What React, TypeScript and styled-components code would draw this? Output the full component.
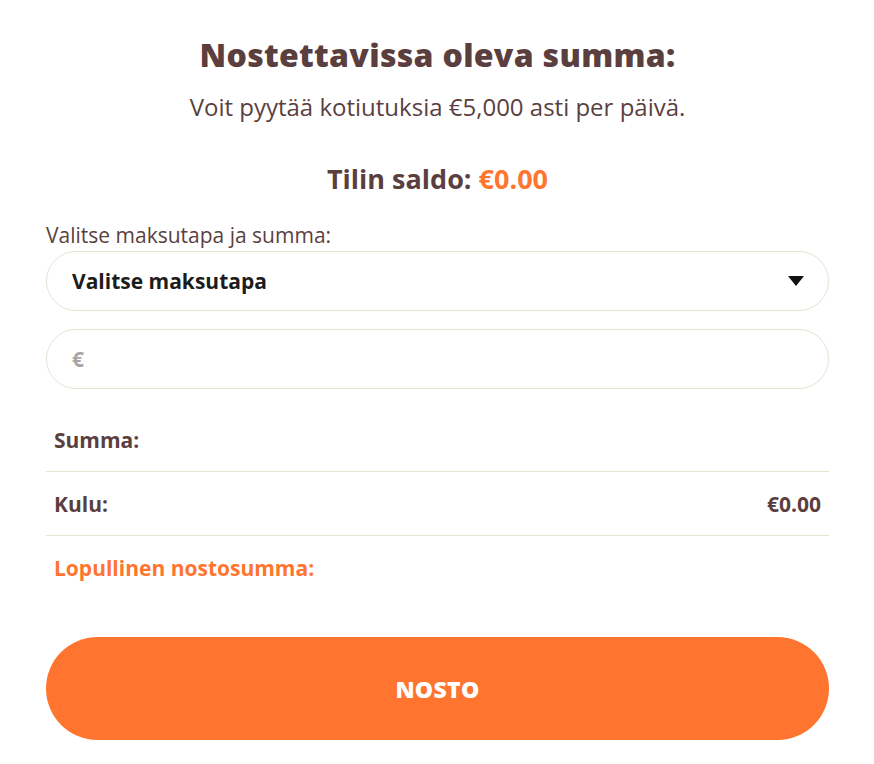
import React from 'react';
import styled, { createGlobalStyle } from 'styled-components';

const GlobalStyle = createGlobalStyle`
    body {
        margin: 0;
        background: #ffffff;
        font-family: 'Open Sans', 'Liberation Sans', sans-serif;
        color: #5b3f3f;
    }
`;

const Page = styled.div`
    display: flex;
    flex-direction: column;
    padding: 30px 45px 0 46px;
`;

const Title = styled.h1`
    margin: 0;
    text-align: center;
    font-family: 'Open Sans', sans-serif;
    font-size: 32px;
    font-weight: 800;
    line-height: 50px;
    color: #5b3f3f;
    letter-spacing: 0.3px;
`;

const SubTitle = styled.p`
    margin: 10px 0 0;
    text-align: center;
    font-size: 24px;
    line-height: 34px;
    color: #5b3f3f;
`;

const Balance = styled.div`
    margin-top: 36px;
    text-align: center;
    font-size: 27px;
    font-weight: 700;
    line-height: 38px;
    color: #5b3f3f;
`;

const Amount = styled.span<{ $accent?: boolean }>`
    color: ${(p) => (p.$accent ? '#ff7530' : 'inherit')};
`;

const Label = styled.div`
    margin-top: 23px;
    font-size: 21px;
    line-height: 28px;
    color: #5b3f3f;
`;

const Field = styled.div<{ $gap: number }>`
    display: flex;
    align-items: center;
    justify-content: space-between;
    height: 58px;
    margin-top: ${(p) => p.$gap}px;
    padding: 0 24px 0 25px;
    border: 1px solid #e8e2d4;
    border-radius: 30px;
`;

const SelectText = styled.span`
    font-size: 21px;
    font-weight: 700;
    color: #1c1c1c;
`;

const Euro = styled.span`
    font-size: 21px;
    font-weight: 700;
    color: #a6a6a6;
`;

const Summary = styled.div`
    display: flex;
    flex-direction: column;
    margin-top: 19px;
`;

const Row = styled.div<{ $line?: boolean; $accent?: boolean }>`
    display: flex;
    justify-content: space-between;
    align-items: center;
    height: 63px;
    padding: 0 8px;
    border-bottom: ${(p) => (p.$line ? '1px solid #e8e2d4' : 'none')};
    font-size: 21px;
    font-weight: 700;
    color: ${(p) => (p.$accent ? '#ff7530' : '#5b3f3f')};
`;

const Button = styled.button`
    margin-top: 38px;
    height: 103px;
    border: none;
    border-radius: 52px;
    background: #ff7530;
    color: #ffffff;
    font-family: 'Open Sans', sans-serif;
    font-size: 23px;
    font-weight: 800;
    letter-spacing: 0.3px;
    cursor: pointer;
`;

const Caret = () => (
    <svg width="16" height="11" viewBox="0 0 16 11">
        <path d="M0 0 H16 L8 10 Z" fill="#111" />
    </svg>
);

const App: React.FC = () => {
    return (
        <>
            <GlobalStyle />
            <Page>
                <Title>Nostettavissa oleva summa:</Title>
                <SubTitle>Voit pyytää kotiutuksia €5,000 asti per päivä.</SubTitle>
                <Balance>
                    Tilin saldo: <Amount $accent>€0.00</Amount>
                </Balance>
                <Label>Valitse maksutapa ja summa:</Label>
                <Field $gap={2}>
                    <SelectText>Valitse maksutapa</SelectText>
                    <Caret />
                </Field>
                <Field $gap={18}>
                    <Euro>€</Euro>
                </Field>
                <Summary>
                    <Row $line>
                        <span>Summa:</span>
                    </Row>
                    <Row $line>
                        <span>Kulu:</span>
                        <span>€0.00</span>
                    </Row>
                    <Row $accent>
                        <span>Lopullinen nostosumma:</span>
                    </Row>
                </Summary>
                <Button>NOSTO</Button>
            </Page>
        </>
    );
};

export default App;
